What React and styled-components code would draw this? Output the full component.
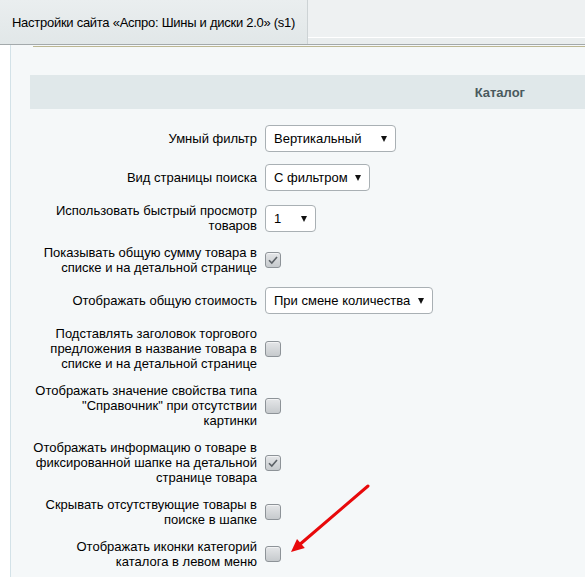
import styled, { createGlobalStyle } from 'styled-components'

const GlobalStyle = createGlobalStyle`
  body {
    margin: 0;
    background: #fff;
    font-family: "Liberation Sans", Arial, sans-serif;
    font-size: 13px;
    color: #000;
    overflow: hidden;
  }
`

const rows = [
  { label: ['Умный фильтр'], select: 'Вертикальный', width: 131 },
  { label: ['Вид страницы поиска'], select: 'С фильтром', width: 105 },
  { label: ['Использовать быстрый просмотр', 'товаров'], select: '1', width: 51 },
  { label: ['Показывать общую сумму товара в', 'списке и на детальной странице'], checked: true },
  { label: ['Отображать общую стоимость'], select: 'При смене количества', width: 168 },
  { label: ['Подставлять заголовок торгового', 'предложения в название товара в', 'списке и на детальной странице'], checked: false },
  { label: ['Отображать значение свойства типа', '"Справочник" при отсутствии', 'картинки'], checked: false },
  { label: ['Отображать информацию о товаре в', 'фиксированной шапке на детальной', 'странице товара'], checked: true },
  { label: ['Скрывать отсутствующие товары в', 'поиске в шапке'], checked: false },
  { label: ['Отображать иконки категорий', 'каталога в левом меню'], checked: false },
]

export default function App(){
  return (
    <Page>
      <GlobalStyle/>
      <TabBar>
        <ActiveTab>Настройки сайта «Аспро: Шины и диски 2.0» (s1)</ActiveTab>
        <TabFiller/>
      </TabBar>

      <Body>
        <Gutter/>
        <Panel>
          <GoldRule/>
          <SectionHead>Каталог</SectionHead>
          <Options>
            {rows.map((r, i) => (
              <Row key={i}>
                <Label>
                  {r.label.map((line, j) => (
                    <span key={j}>{line}{j < r.label.length - 1 && <br/>}</span>
                  ))}
                </Label>
                <Control>
                  {r.select ? (
                    <SelectBox width={r.width}>
                      {r.select}
                      <Caret/>
                    </SelectBox>
                  ) : (
                    <Check>
                      {r.checked && (
                        <svg width="12" height="12" viewBox="0 0 12 12">
                          <path d="M2 6.2 L4.8 9 L10 3" fill="none" stroke="#5b6166" strokeWidth="1.6"/>
                        </svg>
                      )}
                    </Check>
                  )}
                </Control>
              </Row>
            ))}
          </Options>
        </Panel>
      </Body>

      <Pointer width="88" height="74" viewBox="0 0 88 74">
        <path d="M82 4 L14.9 61.5" stroke="#e8090b" strokeWidth="3" strokeLinecap="round"/>
        <polygon points="5,70 18.8,66.1 11,56.9" fill="#e8090b"/>
      </Pointer>
    </Page>
  )
}

const Page = styled.div`
  position: relative;
  width: 585px;
  height: 577px;
  overflow: hidden;
`

const TabBar = styled.div`
  display: flex;
  height: 44px;
  background: #e9edee;
  border-bottom: 1px solid #a3a9ab;
`

const ActiveTab = styled.div`
  width: 295px;
  padding-left: 12px;
  display: flex;
  align-items: center;
  background: linear-gradient(#eaeeef, #e1e7e8);
  border-right: 1px solid #cdd3d5;
  white-space: nowrap;
  letter-spacing: -0.27px;
`

const TabFiller = styled.div`
  flex: 1;
  height: 37px;
  background: #eef1f2;
  border-bottom: 1px solid #fff;
`

const Body = styled.div`
  display: flex;
  height: 532px;
`

const Gutter = styled.div`
  width: 10px;
  background: #fff;
`

const Panel = styled.div`
  flex: 1;
  background: #f5f8f9;
  border-left: 1px solid #d3e2e8;
  padding-left: 19px;
`

const GoldRule = styled.div`
  margin: 1px 0 0 3px;
  border-top: 1px solid #bcb792;
`

const SectionHead = styled.div`
  margin-top: 28px;
  height: 34px;
  display: flex;
  align-items: center;
  justify-content: flex-end;
  padding-right: 60px;
  background: #e0e8ea;
  font-weight: bold;
  color: #4a5a5e;
`

const Options = styled.div`
  margin-top: 10px;
`

const Row = styled.div`
  display: grid;
  grid-template-columns: 235px 1fr;
  align-items: center;
  padding: 6px 0;
`

const Label = styled.div`
  padding-right: 8px;
  text-align: right;
  line-height: 15px;
`

const Control = styled.div`
  display: flex;
  align-items: center;
`

const SelectBox = styled.div`
  position: relative;
  box-sizing: border-box;
  width: ${p => p.width}px;
  height: 27px;
  padding-left: 8px;
  display: flex;
  align-items: center;
  background: #fff;
  border: 1px solid #a9b0b4;
  border-radius: 4px;
`

const Caret = styled.span`
  position: absolute;
  right: 8px;
  top: 10px;
  border-left: 3.5px solid transparent;
  border-right: 3.5px solid transparent;
  border-top: 6px solid #111;
`

const Check = styled.span`
  box-sizing: border-box;
  width: 16px;
  height: 16px;
  display: flex;
  align-items: center;
  justify-content: center;
  border: 1px solid #8d9398;
  border-radius: 3px;
  background: linear-gradient(#e4e6e8, #c6cacd);
  box-shadow: inset 0 1px 0 #f2f3f4;
`

const Pointer = styled.svg`
  position: absolute;
  left: 286px;
  top: 482px;
  pointer-events: none;
`
